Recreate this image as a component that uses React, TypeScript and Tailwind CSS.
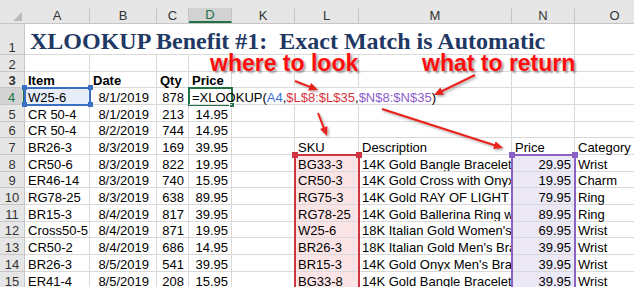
import React from "react";

const COLS = [
  { key: "A", w: "w-[65px]" },
  { key: "B", w: "w-[67px]" },
  { key: "C", w: "w-[32px]" },
  { key: "D", w: "w-[43px]" },
  { key: "K", w: "w-[63px]" },
  { key: "L", w: "w-[64px]" },
  { key: "M", w: "w-[153px]" },
  { key: "N", w: "w-[63px]" },
  { key: "O", w: "w-[80px]" },
];

// rows 2..15
const ROW_H: Record<number, string> = {
  2: "h-[17px]",
  3: "h-[16px]",
  4: "h-[17px]",
  5: "h-[17px]",
  6: "h-[16px]",
  7: "h-[17px]",
  8: "h-[17px]",
  9: "h-[16px]",
  10: "h-[17px]",
  11: "h-[17px]",
  12: "h-[16px]",
  13: "h-[17px]",
  14: "h-[17px]",
  15: "h-[17px]",
};

const sales = [
  ["CR 50-4", "8/1/2019", "213", "14.95"],
  ["CR 50-4", "8/2/2019", "744", "14.95"],
  ["BR26-3", "8/3/2019", "169", "39.95"],
  ["CR50-6", "8/3/2019", "822", "19.95"],
  ["ER46-14", "8/3/2019", "740", "15.95"],
  ["RG78-25", "8/3/2019", "638", "89.95"],
  ["BR15-3", "8/4/2019", "817", "39.95"],
  ["Cross50-5", "8/4/2019", "871", "19.95"],
  ["CR50-2", "8/4/2019", "686", "14.95"],
  ["BR26-3", "8/5/2019", "541", "39.95"],
  ["ER41-4", "8/5/2019", "208", "15.95"],
];

const products = [
  ["BG33-3", "14K Gold Bangle Bracelet", "29.95", "Wrist"],
  ["CR50-3", "14K Gold Cross with Onyx", "19.95", "Charm"],
  ["RG75-3", "14K Gold RAY OF LIGHT Ring", "79.95", "Ring"],
  ["RG78-25", "14K Gold Ballerina Ring with", "89.95", "Ring"],
  ["W25-6", "18K Italian Gold Women's Bracelet", "69.95", "Wrist"],
  ["BR26-3", "18K Italian Gold Men's Bracelet", "39.95", "Wrist"],
  ["BR15-3", "14K Gold Onyx Men's Bracelet", "39.95", "Wrist"],
  ["BG33-8", "14K Gold Bangle Bracelet", "39.95", "Wrist"],
];

type CellProps = {
  w: string;
  pad?: string;
  right?: boolean;
  noBorder?: boolean;
  className?: string;
  children?: React.ReactNode;
};

const Cell = ({ w, pad = "pl-[3px]", right, noBorder, className = "", children }: CellProps) => (
  <div
    className={`${w} h-full shrink-0 flex items-end leading-[12px] whitespace-nowrap border-b border-[#d9d9d9] ${
      noBorder ? "" : "border-r"
    } ${right ? "justify-end" : ""} ${pad} ${className}`}
  >
    {children}
  </div>
);

const RowHead = ({ n, active }: { n: number; active?: boolean }) => (
  <div
    className={`w-[25px] h-full shrink-0 flex items-end justify-center leading-[12px] border-b border-[#c6c6c6] ${
      active
        ? "bg-[#d2d2d2] text-[#217346] border-r-2 border-r-[#217346]"
        : "bg-[#e6e6e6] text-[#333] border-r border-r-[#c6c6c6]"
    }`}
  >
    {n}
  </div>
);

const Arrow = ({ x1, y1, x2, y2 }: { x1: number; y1: number; x2: number; y2: number }) => {
  const dx = x2 - x1;
  const dy = y2 - y1;
  const len = Math.hypot(dx, dy);
  const ux = dx / len;
  const uy = dy / len;
  const hl = 9;
  const hw = 4;
  const bx = x2 - ux * hl;
  const by = y2 - uy * hl;
  const pts = `${x2},${y2} ${bx - uy * hw},${by + ux * hw} ${bx + uy * hw},${by - ux * hw}`;
  return (
    <g>
      <line x1={x1} y1={y1} x2={bx + ux} y2={by + uy} stroke="#e8201a" strokeWidth={2} />
      <polygon points={pts} fill="#e8201a" />
    </g>
  );
};

export default function App() {
  return (
    <div className="relative w-[634px] h-[287px] overflow-hidden bg-white font-['Liberation_Sans',Arial,sans-serif] text-[13px] text-black">
      {/* column headers */}
      <div className="flex h-[24px] bg-[#e6e6e6] border-b border-[#c6c6c6]">
        <div className="relative w-[25px] shrink-0">
          <svg className="absolute left-0 top-0" width="25" height="24">
            <polygon points="22,12 22,21 13,21" fill="#b9b9b9" />
          </svg>
        </div>
        {COLS.map((c) => (
          <div key={c.key} className={`${c.w} shrink-0 pt-[8px] h-full`}>
            <div
              className={`h-full flex items-center justify-center leading-none ${
                c.key === "D"
                  ? "bg-[#d2d2d2] text-[#217346] border-b-2 border-[#217346] border-r border-r-[#c6c6c6]"
                  : "text-[#333] border-r border-[#c6c6c6]"
              }`}
            >
              {c.key}
            </div>
          </div>
        ))}
      </div>

      {/* row 1 - title */}
      <div className="flex h-[31px]">
        <RowHead n={1} />
        <div className="w-[550px] shrink-0 h-full border-r border-b border-[#d9d9d9] pl-[5px] pt-[5px] whitespace-nowrap font-['Liberation_Serif',serif] font-bold text-[24px] leading-[24px] text-[#1f3864]">
          XLOOKUP Benefit #1:&nbsp; Exact Match is Automatic
        </div>
        <Cell w="w-[80px]" />
      </div>

      {/* row 2 */}
      <div className={`flex ${ROW_H[2]}`}>
        <RowHead n={2} />
        {COLS.map((c) => (
          <Cell key={c.key} w={c.w} />
        ))}
      </div>

      {/* row 3 - headers */}
      <div className={`flex ${ROW_H[3]} font-bold`}>
        <RowHead n={3} />
        <Cell w="w-[65px]">Item</Cell>
        <Cell w="w-[67px]">Date</Cell>
        <Cell w="w-[32px]">Qty</Cell>
        <Cell w="w-[43px]">Price</Cell>
        <Cell w="w-[63px]" />
        <Cell w="w-[64px]" />
        <Cell w="w-[153px]" />
        <Cell w="w-[63px]" />
        <Cell w="w-[80px]" />
      </div>

      {/* row 4 - formula */}
      <div className={`flex ${ROW_H[4]}`}>
        <RowHead n={4} active />
        <Cell w="w-[65px]" className="bg-[#e8eef9]">
          W25-6
        </Cell>
        <Cell w="w-[67px]" right pad="pr-[7px]">
          8/1/2019
        </Cell>
        <Cell w="w-[32px]" right pad="pr-[4px]">
          878
        </Cell>
        <Cell w="w-[43px]" noBorder className="relative z-10 overflow-visible">
          <span>
            =XLOOKUP(<span className="text-[#3a6fd2]">A4</span>,
            <span className="text-[#d8333c]">$L$8:$L$35</span>,
            <span className="text-[#8d5ccb]">$N$8:$N$35</span>)
          </span>
        </Cell>
        <Cell w="w-[63px]" noBorder />
        <Cell w="w-[64px]" noBorder />
        <Cell w="w-[153px]" />
        <Cell w="w-[63px]" />
        <Cell w="w-[80px]" />
      </div>

      {/* rows 5..15 */}
      {sales.map((s, i) => {
        const r = i + 5;
        const p = r >= 8 ? products[r - 8] : null;
        return (
          <div key={r} className={`flex ${ROW_H[r]}`}>
            <RowHead n={r} />
            <Cell w="w-[65px]">{s[0]}</Cell>
            <Cell w="w-[67px]" right pad="pr-[7px]">
              {s[1]}
            </Cell>
            <Cell w="w-[32px]" right pad="pr-[4px]">
              {s[2]}
            </Cell>
            <Cell w="w-[43px]" right pad="pr-[3px]">
              {s[3]}
            </Cell>
            <Cell w="w-[63px]" />
            {r === 7 ? (
              <>
                <Cell w="w-[64px]">SKU</Cell>
                <Cell w="w-[153px]">Description</Cell>
                <Cell w="w-[63px]">Price</Cell>
                <Cell w="w-[80px]">Category</Cell>
              </>
            ) : p ? (
              <>
                <Cell w="w-[64px]" className="bg-[#fbe4e5]">
                  {p[0]}
                </Cell>
                <Cell w="w-[153px]" className="overflow-hidden">
                  {p[1]}
                </Cell>
                <Cell w="w-[63px]" right pad="pr-[3px]" className="bg-[#ece8f6]">
                  {p[2]}
                </Cell>
                <Cell w="w-[80px]">{p[3]}</Cell>
              </>
            ) : (
              <>
                <Cell w="w-[64px]" />
                <Cell w="w-[153px]" />
                <Cell w="w-[63px]" />
                <Cell w="w-[80px]" />
              </>
            )}
          </div>
        );
      })}

      {/* A4 reference box */}
      <div className="absolute left-[24px] top-[87px] w-[67px] h-[19px] border-2 border-[#3a6fc4] pointer-events-none" />
      <div className="absolute left-[22px] top-[85px] w-[5px] h-[5px] bg-[#3a6fc4]" />
      <div className="absolute left-[88px] top-[85px] w-[5px] h-[5px] bg-[#3a6fc4]" />
      <div className="absolute left-[22px] top-[102px] w-[5px] h-[5px] bg-[#3a6fc4]" />
      <div className="absolute left-[88px] top-[102px] w-[5px] h-[5px] bg-[#3a6fc4]" />

      {/* active cell D4 */}
      <div className="absolute left-[188px] top-[87px] w-[45px] h-[19px] border-2 border-[#217346] pointer-events-none" />
      <div className="absolute left-[229px] top-[102px] w-[6px] h-[6px] bg-[#217346] border border-white" />

      {/* L8:L35 reference */}
      <div className="absolute left-[294px] top-[154px] w-[66px] h-[200px] border-2 border-[#cf3540] pointer-events-none" />
      <div className="absolute left-[292px] top-[152px] w-[6px] h-[6px] bg-[#cf3540]" />
      <div className="absolute left-[356px] top-[152px] w-[6px] h-[6px] bg-[#cf3540]" />

      {/* N8:N35 reference */}
      <div className="absolute left-[511px] top-[154px] w-[65px] h-[200px] border-2 border-[#8a62c4] pointer-events-none" />
      <div className="absolute left-[509px] top-[152px] w-[6px] h-[6px] bg-[#8a62c4]" />
      <div className="absolute left-[572px] top-[152px] w-[6px] h-[6px] bg-[#8a62c4]" />

      {/* callouts */}
      <div className="absolute left-[210px] top-[52px] font-bold text-[23px] leading-[23px] text-[#ff0d0d] whitespace-nowrap [text-shadow:2px_2px_2px_rgba(0,0,0,0.35)]">
        where to look
      </div>
      <div className="absolute left-[422px] top-[52px] font-bold text-[23px] leading-[23px] text-[#ff0d0d] whitespace-nowrap [text-shadow:2px_2px_2px_rgba(0,0,0,0.35)]">
        what to return
      </div>

      <svg className="absolute left-0 top-0 pointer-events-none" width="634" height="287">
        <defs>
          <filter id="sh" x="-20%" y="-20%" width="140%" height="140%">
            <feDropShadow dx="1.5" dy="1.5" stdDeviation="1" floodColor="#000" floodOpacity="0.35" />
          </filter>
        </defs>
        <g filter="url(#sh)">
          <Arrow x1={295} y1={81} x2={318} y2={90} />
          <Arrow x1={475} y1={75} x2={434} y2={95} />
          <Arrow x1={318} y1={113} x2={327} y2={136} />
          <Arrow x1={382} y1={109} x2={503} y2={148} />
        </g>
      </svg>
    </div>
  );
}
